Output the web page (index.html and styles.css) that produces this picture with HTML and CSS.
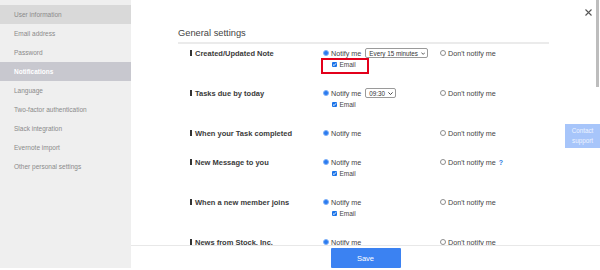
FILE: index.html
```html
<!DOCTYPE html>
<html>
<head>
<meta charset="utf-8">
<link rel="stylesheet" href="styles.css">
</head>
<body>
<div class="app">
  <nav class="sidebar">
    <div class="nav-item hover">User information</div>
    <div class="nav-item">Email address</div>
    <div class="nav-item">Password</div>
    <div class="nav-item active">Notifications</div>
    <div class="nav-item">Language</div>
    <div class="nav-item">Two-factor authentication</div>
    <div class="nav-item">Slack integration</div>
    <div class="nav-item">Evernote import</div>
    <div class="nav-item">Other personal settings</div>
  </nav>
  <main class="main">
    <div class="close">
      <svg width="7" height="7" viewBox="0 0 7 7"><path d="M0.5 0.5L6.5 6.5M6.5 0.5L0.5 6.5" stroke="#555" stroke-width="1.1" fill="none"/></svg>
    </div>
    <div class="scroll-thumb"></div>
    <div class="contact">Contact<br>support</div>
    <div class="content">
      <div class="heading">General settings</div>

      <div class="row">
        <div class="label">Created/Updated Note</div>
        <div class="opt">
          <div class="opt-line"><span class="radio on"></span><span class="txt">Notify me</span>
            <span class="select sel-wide">Every 15 minutes<svg width="5" height="3" viewBox="0 0 5 3"><path d="M0.4 0.4L2.5 2.5L4.6 0.4" stroke="#333" stroke-width="0.9" fill="none"/></svg></span>
          </div>
          <div class="email-line marked"><span class="check"><svg width="5" height="5" viewBox="0 0 5 5"><path d="M1 2.6L2.1 3.6L4 1.3" stroke="#fff" stroke-width="0.9" fill="none"/></svg></span><span class="email">Email</span></div>
        </div>
        <div class="opt"><div class="opt-line"><span class="radio"></span><span class="txt">Don't notify me</span></div></div>
      </div>

      <div class="row">
        <div class="label">Tasks due by today</div>
        <div class="opt">
          <div class="opt-line"><span class="radio on"></span><span class="txt">Notify me</span>
            <span class="select">09:30<svg width="5" height="3" viewBox="0 0 5 3"><path d="M0.4 0.4L2.5 2.5L4.6 0.4" stroke="#333" stroke-width="0.9" fill="none"/></svg></span>
          </div>
          <div class="email-line"><span class="check"><svg width="5" height="5" viewBox="0 0 5 5"><path d="M1 2.6L2.1 3.6L4 1.3" stroke="#fff" stroke-width="0.9" fill="none"/></svg></span><span class="email">Email</span></div>
        </div>
        <div class="opt"><div class="opt-line"><span class="radio"></span><span class="txt">Don't notify me</span></div></div>
      </div>

      <div class="row">
        <div class="label">When your Task completed</div>
        <div class="opt">
          <div class="opt-line"><span class="radio on"></span><span class="txt">Notify me</span></div>
        </div>
        <div class="opt"><div class="opt-line"><span class="radio"></span><span class="txt">Don't notify me</span></div></div>
      </div>

      <div class="row">
        <div class="label">New Message to you</div>
        <div class="opt">
          <div class="opt-line"><span class="radio on"></span><span class="txt">Notify me</span></div>
          <div class="email-line"><span class="check"><svg width="5" height="5" viewBox="0 0 5 5"><path d="M1 2.6L2.1 3.6L4 1.3" stroke="#fff" stroke-width="0.9" fill="none"/></svg></span><span class="email">Email</span></div>
        </div>
        <div class="opt"><div class="opt-line"><span class="radio"></span><span class="txt">Don't notify me</span><span class="help">?</span></div></div>
      </div>

      <div class="row">
        <div class="label">When a new member joins</div>
        <div class="opt">
          <div class="opt-line"><span class="radio on"></span><span class="txt">Notify me</span></div>
          <div class="email-line"><span class="check"><svg width="5" height="5" viewBox="0 0 5 5"><path d="M1 2.6L2.1 3.6L4 1.3" stroke="#fff" stroke-width="0.9" fill="none"/></svg></span><span class="email">Email</span></div>
        </div>
        <div class="opt"><div class="opt-line"><span class="radio"></span><span class="txt">Don't notify me</span></div></div>
      </div>

      <div class="row">
        <div class="label">News from Stock, Inc.</div>
        <div class="opt">
          <div class="opt-line"><span class="radio on"></span><span class="txt">Notify me</span></div>
        </div>
        <div class="opt"><div class="opt-line"><span class="radio"></span><span class="txt">Don't notify me</span></div></div>
      </div>
    </div>
    <div class="footer">
      <button class="save">Save</button>
    </div>
  </main>
</div>
</body>
</html>
```

FILE: styles.css
```css
* { box-sizing: border-box; }
html, body { margin: 0; padding: 0; background: #fff; }
body {
  font-family: "Liberation Sans", Arial, sans-serif;
  width: 600px;
  height: 270px;
  overflow: hidden;
}
.app {
  display: flex;
  height: 270px;
}
.sidebar {
  width: 131px;
  flex: none;
  background: #efefef;
  padding-top: 5px;
  margin-bottom: 2px;
}
.nav-item {
  height: 19px;
  line-height: 19px;
  padding-left: 14px;
  font-size: 6.5px;
  color: #8a8a8a;
  white-space: nowrap;
}
.nav-item.hover { background: #d9d9d9; }
.nav-item.active {
  background: #c8c8cf;
  color: #fff;
  font-weight: bold;
}
.main {
  flex: 1;
  display: flex;
  flex-direction: column;
  position: relative;
  min-width: 0;
}
.close {
  position: absolute;
  left: 454px;
  top: 9px;
  width: 7px;
  height: 7px;
  line-height: 0;
}
.scroll-thumb {
  position: absolute;
  right: 1px;
  top: 0;
  width: 3px;
  height: 87px;
  background: #bdbdbd;
}
.contact {
  position: absolute;
  right: 0;
  top: 124px;
  width: 35px;
  height: 24px;
  background: #a7c5fa;
  color: #eef4ff;
  font-size: 6.3px;
  line-height: 10px;
  text-align: center;
  padding-top: 2px;
}
.content {
  flex: 1;
  overflow: hidden;
  padding: 26px 51px 0 47px;
}
.heading {
  font-size: 9.3px;
  line-height: 14px;
  color: #444;
  padding-bottom: 2px;
  border-bottom: 2px solid #ebebeb;
  margin-bottom: 3px;
}
.row {
  display: grid;
  grid-template-columns: 133px 117px 1fr;
  padding-left: 12px;
  padding-bottom: 17px;
}
.label {
  height: 12px;
  display: flex;
  align-items: center;
  font-size: 7.5px;
  font-weight: bold;
  color: #3a3a3a;
  white-space: nowrap;
}
.label::before {
  content: "";
  width: 1.5px;
  height: 6px;
  background: #333;
  margin-right: 3.5px;
}
.opt-line {
  height: 12px;
  display: flex;
  align-items: center;
  white-space: nowrap;
}
.txt {
  font-size: 7.2px;
  color: #444;
}
.radio {
  width: 6px;
  height: 6px;
  border-radius: 50%;
  border: 1px solid #8d8d8d;
  background: #fff;
  margin-right: 2px;
  flex: none;
}
.radio.on {
  border-color: #7fb0f7;
  background: #2a7bf0;
}
.select {
  display: inline-flex;
  align-items: center;
  gap: 3px;
  height: 10px;
  margin-left: 4px;
  padding: 0 2px 0 3px;
  border: 1px solid #9a9a9a;
  border-radius: 2px;
  font-size: 6.3px;
  color: #333;
  background: #fff;
}
.select svg { display: block; }
.sel-wide { width: 63px; justify-content: space-between; }
.email-line {
  position: relative;
  height: 11px;
  display: flex;
  align-items: center;
  margin-left: 9px;
  width: fit-content;
}
.email-line.marked::after {
  content: "";
  position: absolute;
  left: -11px;
  right: -13px;
  top: -1.5px;
  bottom: -3.5px;
  border: 2px solid #e3001b;
}
.check {
  width: 5px;
  height: 5px;
  background: #1a73e8;
  border-radius: 1px;
  margin-right: 2.5px;
  line-height: 0;
}
.check svg { display: block; }
.email {
  font-size: 6.5px;
  color: #444;
}
.help {
  font-size: 7px;
  font-weight: bold;
  color: #2a7ae2;
  margin-left: 3px;
}
.footer {
  height: 25px;
  flex: none;
  border-top: 1px solid #e8e8e8;
  display: flex;
  justify-content: center;
  padding-top: 2px;
}
.save {
  width: 70px;
  height: 20px;
  border: none;
  border-radius: 1px;
  background: #3b82f2;
  color: #fff;
  font-family: "Liberation Sans", Arial, sans-serif;
  font-size: 7.5px;
  padding: 0;
}
```
